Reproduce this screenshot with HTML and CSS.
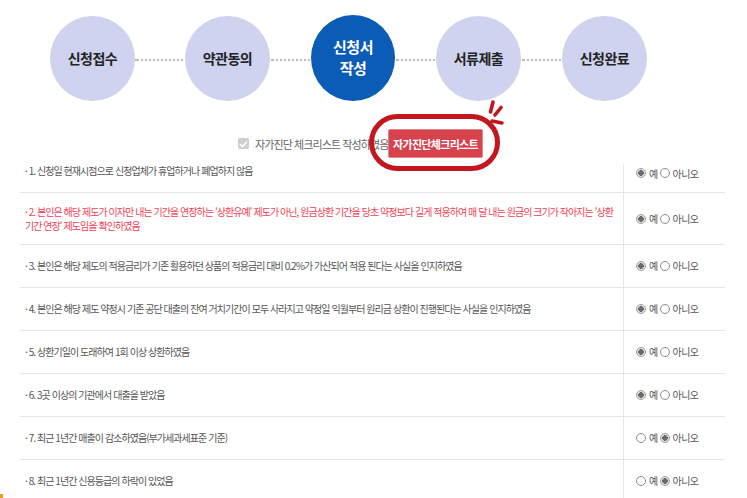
FILE: index.html
```html
<!DOCTYPE html>
<html lang="ko">
<head>
    <meta charset="UTF-8">
    <meta name="viewport" content="width=device-width, initial-scale=1.0">
    <title>자가진단 체크리스트</title>
    <link rel="stylesheet" href="styles.css">
</head>
<body>
    <div class="steps">
        <div class="step">신청접수</div>
        <div class="dots first"></div>
        <div class="step">약관동의</div>
        <div class="dots"></div>
        <div class="step active">신청서<br>작성</div>
        <div class="dots"></div>
        <div class="step">서류제출</div>
        <div class="dots"></div>
        <div class="step">신청완료</div>
    </div>

    <div class="check-row">
        <span class="checkbox"><svg width="9" height="8" viewBox="0 0 9 8"><path d="M1 4l2.5 2.5L8 1.5" fill="none" stroke="#fff" stroke-width="1.6"/></svg></span>
        <span class="check-label">자가진단 체크리스트 작성하였음</span>
        <button class="btn-check">자가진단체크리스트</button>
        <!-- red marker drawn over the button -->
        <div class="marker"></div>
        <svg class="marker-rays" width="32" height="32" viewBox="0 0 32 32">
            <path d="M6 3l-2.5 10M14 8.5l-6 7.5M15 24l-10-2" fill="none" stroke="#c3171d" stroke-width="3.6" stroke-linecap="round"/>
        </svg>
    </div>

    <div class="list">
        <div class="row first">
            <div class="q">· 1. 신청일 현재시점으로 신청업체가 휴업하거나 폐업하지 않음</div>
            <div class="a"><span class="radio on"></span><span class="opt">예</span><span class="radio"></span><span class="opt">아니오</span></div>
        </div>
        <div class="row tall">
            <div class="q red">· 2. 본인은 해당 제도가 이자만 내는 기간을 연장하는 '상환유예' 제도가 아닌, 원금상환 기간을 당초 약정보다 길게 적용하여 매 달 내는 원금의 크기가 작아지는 '상환<br>기간 연장' 제도임을 확인하였음</div>
            <div class="a"><span class="radio on"></span><span class="opt">예</span><span class="radio"></span><span class="opt">아니오</span></div>
        </div>
        <div class="row">
            <div class="q">· 3. 본인은 해당 제도의 적용금리가 기존 활용하던 상품의 적용금리 대비 0.2%가 가산되어 적용 된다는 사실을 인지하였음</div>
            <div class="a"><span class="radio on"></span><span class="opt">예</span><span class="radio"></span><span class="opt">아니오</span></div>
        </div>
        <div class="row">
            <div class="q">· 4. 본인은 해당 제도 약정시 기존 공단 대출의 잔여 거치기간이 모두 사라지고 약정일 익월부터 원리금 상환이 진행된다는 사실을 인지하였음</div>
            <div class="a"><span class="radio on"></span><span class="opt">예</span><span class="radio"></span><span class="opt">아니오</span></div>
        </div>
        <div class="row">
            <div class="q">· 5. 상환기일이 도래하여 1회 이상 상환하였음</div>
            <div class="a"><span class="radio on"></span><span class="opt">예</span><span class="radio"></span><span class="opt">아니오</span></div>
        </div>
        <div class="row">
            <div class="q">· 6. 3곳 이상의 기관에서 대출을 받았음</div>
            <div class="a"><span class="radio on"></span><span class="opt">예</span><span class="radio"></span><span class="opt">아니오</span></div>
        </div>
        <div class="row">
            <div class="q">· 7. 최근 1년간 매출이 감소하였음(부가세과세표준 기준)</div>
            <div class="a"><span class="radio"></span><span class="opt">예</span><span class="radio on"></span><span class="opt">아니오</span></div>
        </div>
        <div class="row">
            <div class="q">· 8. 최근 1년간 신용등급의 하락이 있었음</div>
            <div class="a"><span class="radio"></span><span class="opt">예</span><span class="radio on"></span><span class="opt">아니오</span></div>
        </div>
    </div>

    <div class="corner"></div>
</body>
</html>
```

FILE: styles.css
```css
body {
    margin: 0;
    background-color: #ffffff;
    font-family: "Noto Sans CJK KR", "Noto Sans", sans-serif;
    color: #555;
    overflow: hidden;
}
/* Step circles */
.steps {
    display: flex;
    align-items: center;
    padding: 15px 0 0 50px;
}
.step {
    width: 85px;
    height: 85px;
    border-radius: 50%;
    background-color: #cfd3f0;
    color: #222;
    font-size: 14px;
    font-weight: bold;
    letter-spacing: -0.5px;
    line-height: 21px;
    display: flex;
    align-items: center;
    justify-content: center;
    text-align: center;
    flex-shrink: 0;
}
.step.active {
    background-color: #0b5cb6;
    color: #ffffff;
    font-size: 15px;
    width: 84px;
    height: 86px;
    padding-bottom: 3px;
    box-sizing: border-box;
}
.dots {
    width: 41px;
    height: 2px;
    margin-top: 3px;
    background: repeating-linear-gradient(90deg, #bdbdbd 0 2px, transparent 2px 4px);
    background-position: 2px 0;
}
.dots.first {
    width: 50px;
}
/* Checkbox + button row */
.check-row {
    position: relative;
    display: flex;
    align-items: center;
    padding-left: 238px;
    margin-top: 28px;
    height: 29px;
}
.checkbox {
    width: 11px;
    height: 11px;
    border-radius: 2px;
    background-color: #cfcfcf;
    display: flex;
    align-items: center;
    justify-content: center;
}
.check-label {
    margin-left: 6px;
    font-size: 11px;
    letter-spacing: -0.9px;
    color: #666;
    width: 133px;
    white-space: nowrap;
}
.btn-check {
    width: 95px;
    height: 29px;
    background-color: #d7424c;
    border: 1px solid #e98088;
    border-radius: 2px;
    color: #ffffff;
    font-family: inherit;
    font-size: 11px;
    font-weight: bold;
    letter-spacing: -0.7px;
    padding: 0;
}
.marker {
    position: absolute;
    left: 369px;
    top: -15px;
    width: 131px;
    height: 57px;
    box-sizing: border-box;
    border: 5px solid #c3171d;
    border-radius: 29px;
}
.marker-rays {
    position: absolute;
    left: 487px;
    top: -30px;
}
/* Checklist */
.list {
    margin: 6px 0 0 20px;
    width: 705px;
}
.row {
    display: flex;
    height: 43px;
    border-bottom: 1px solid #e6e6e6;
    box-sizing: border-box;
}
.row.first {
    height: 29px;
}
.row.tall {
    height: 52px;
}
.q {
    flex: 1;
    display: flex;
    align-items: center;
    padding-left: 5px;
    font-size: 10px;
    letter-spacing: -0.95px;
    line-height: 14px;
    white-space: nowrap;
}
.row.first .q,
.row.first .a {
    align-items: flex-start;
}
.q.red {
    color: #ef3f55;
}
.a {
    width: 102px;
    border-left: 1px solid #e8e8e8;
    display: flex;
    align-items: center;
    padding-left: 12px;
    box-sizing: border-box;
}
.row.first .a {
    padding-top: 4px;
}
.radio {
    width: 10px;
    height: 10px;
    border: 1px solid #8d8d8d;
    border-radius: 50%;
    background-color: #fff;
    box-sizing: border-box;
    flex-shrink: 0;
}
.radio.on {
    border-color: #a0a0a0;
    background: radial-gradient(circle, #6a6a6a 0 2.6px, #e2e2e2 3px);
}
.opt {
    font-size: 10px;
    letter-spacing: -0.6px;
    color: #555;
    margin: 0 2px 0 3px;
    line-height: 12px;
}
.corner {
    position: absolute;
    left: 0;
    top: 494px;
    width: 3px;
    height: 4px;
    background-color: #f39a1e;
}
```
